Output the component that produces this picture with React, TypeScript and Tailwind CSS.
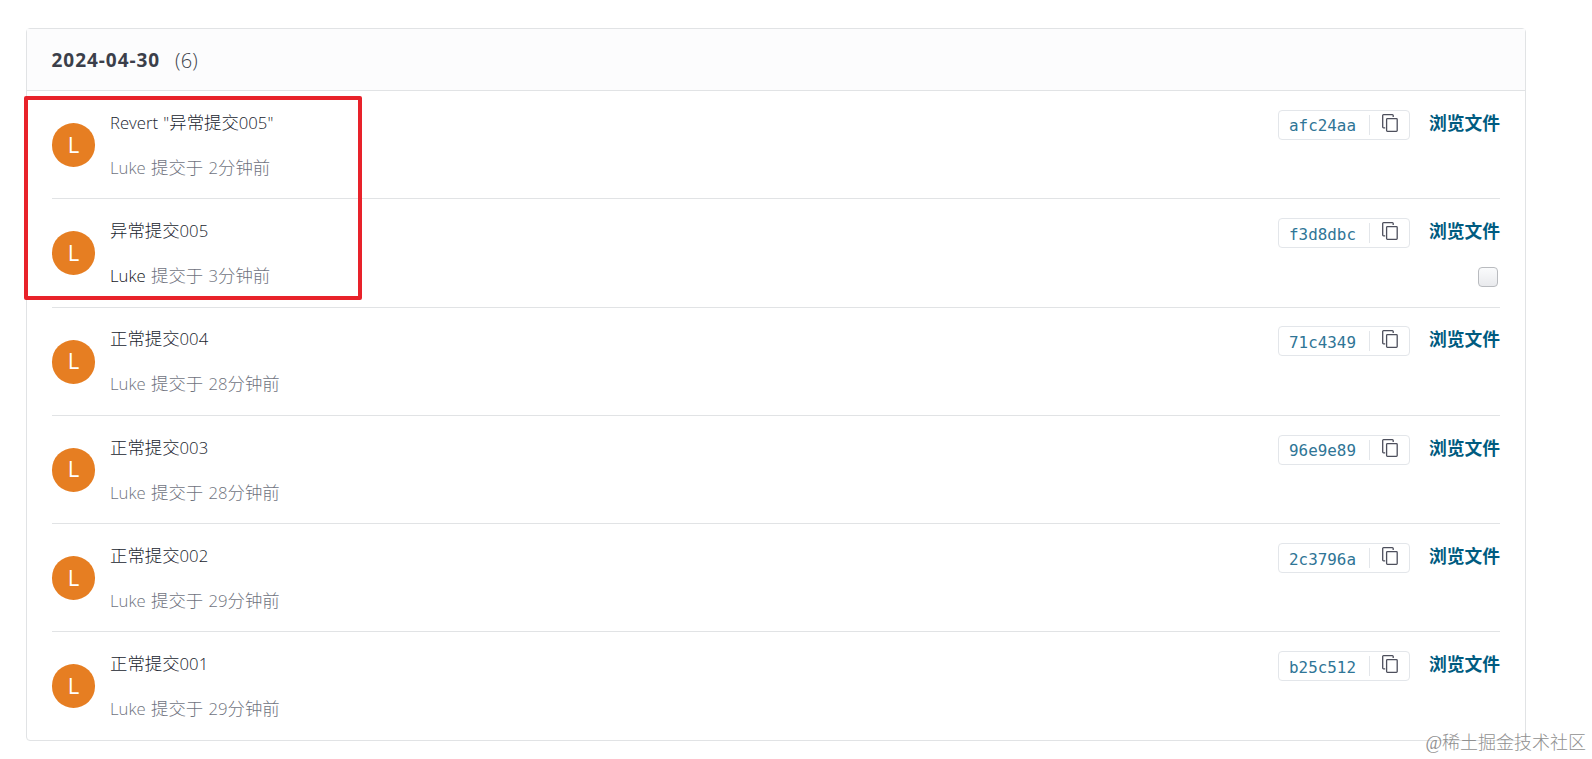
import clsx from "clsx";

type Commit = {
  title: string;
  time: string;
  hash: string;
  active?: boolean;
};

const commits: Commit[] = [
  { title: 'Revert "异常提交005"', time: "2分钟前", hash: "afc24aa" },
  { title: "异常提交005", time: "3分钟前", hash: "f3d8dbc", active: true },
  { title: "正常提交004", time: "28分钟前", hash: "71c4349" },
  { title: "正常提交003", time: "28分钟前", hash: "96e9e89" },
  { title: "正常提交002", time: "29分钟前", hash: "2c3796a" },
  { title: "正常提交001", time: "29分钟前", hash: "b25c512" },
];

// Chinese glyphs are set slightly larger than the latin ones
function Mixed({ text }: { text: string }) {
  return (
    <>
      {text.split(/([\u4e00-\u9fff]+)/).map((part, i) => (
        <span key={i} className={clsx(i % 2 === 1 && "text-[17.4px]")}>{part}</span>
      ))}
    </>
  );
}

function CopyIcon() {
  return (
    <svg width="16" height="19" viewBox="0 0 16 19" fill="none" stroke="#4d4f5c" strokeWidth="1.3" className="-mt-px">
      <rect x="4.6" y="4.6" width="10.6" height="12.8" rx="0.8" />
      <path d="M11.2 3V1.5a.8.8 0 0 0-.8-.8H1.5a.8.8 0 0 0-.8.8v11.6a.8.8 0 0 0 .8.8h1.7" />
    </svg>
  );
}

function CommitRow({ commit }: { commit: Commit }) {
  return (
    <li className="flex h-[108.3px] border-t border-[#e1e3e5] first:h-[107.3px] first:border-t-0">
      <div className="mt-8 flex h-11 w-[43px] shrink-0 items-center justify-center rounded-full bg-[#e67e22] pb-0.5 text-[22px] text-white">L</div>
      <div className="ml-[15px] flex-1 whitespace-pre text-[16.7px] font-light [word-spacing:1px]">
        <p className="mt-[18.7px] h-6 leading-6 text-[#20242e]"><Mixed text={commit.title} /></p>
        <p className="mt-[21px] h-6 leading-6 text-[#6f737e]">
          <span className={clsx(commit.active && "text-[#14161c]")}>Luke</span>
          <Mixed text={` 提交于 ${commit.time}`} />
        </p>
      </div>
      <div className="flex flex-col items-end">
        <div className="mt-[18.8px] flex items-start">
          <div className="flex h-[30px] w-[132px] items-center rounded-[4px] border border-[#e3e6ea]">
            <a className="w-[90px] pt-[3px] pl-2.5 font-['DejaVu_Sans_Mono',monospace] text-[15.9px] text-[#2f7596]">{commit.hash}</a>
            <div className="flex h-5 flex-1 justify-center border-l border-[#e3e6ea]">
              <CopyIcon />
            </div>
          </div>
          <a className="ml-[19px] w-[71px] text-[17.75px] leading-[26px] font-bold whitespace-nowrap text-[#005b80]">浏览文件</a>
        </div>
        {commit.active && (
          <div className="mt-[19px] mr-[2px] size-5 rounded-[4px] border border-[#b9bbbf] bg-gradient-to-b from-[#fafbfc] to-[#e9eaed]" />
        )}
      </div>
    </li>
  );
}

export default function App() {
  return (
    <div className="relative h-[759px] w-full overflow-hidden bg-white pt-7 pl-[26px] font-['Open_Sans','Noto_Sans_CJK_SC',sans-serif]">
      <section className="h-[713px] w-[1500px] rounded-[4px] border border-[#e1e3e5]">
        <header className="flex h-[62px] items-center border-b border-[#e1e3e5] bg-[#fcfcfd] pt-0.5 pl-[24.5px] text-[#3b3f4a]">
          <h2 className="w-[123.5px] text-[19px] font-bold tracking-[0.95px]">2024-04-30</h2>
          <span className="text-[20px] font-light tracking-[0.2px]">(6)</span>
        </header>
        <ul className="mx-[25px]">
          {commits.map((commit) => (
            <CommitRow key={commit.hash} commit={commit} />
          ))}
        </ul>
      </section>

      <div className="absolute top-[95.6px] left-[24px] h-[204.4px] w-[338px] rounded-[2px] border-4 border-[#e8222a]" />
      <p className="absolute right-[6px] bottom-[4px] font-['Liberation_Serif','Noto_Sans_CJK_SC',serif] text-[18px] leading-6 font-light text-[#909090]">@稀土掘金技术社区</p>
    </div>
  );
}
